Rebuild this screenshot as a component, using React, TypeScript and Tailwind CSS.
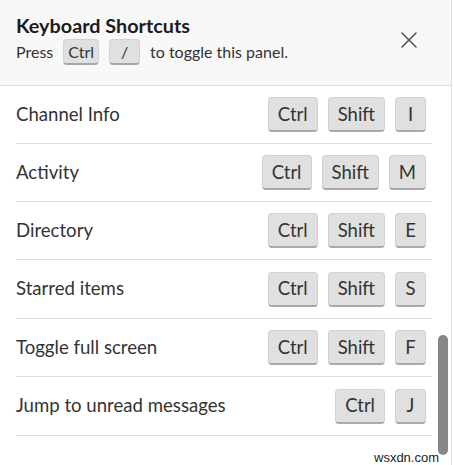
import React from "react";

const rows: { label: string; keys: string[]; h: string }[] = [
  { label: "Channel Info", keys: ["Ctrl", "Shift", "I"], h: "h-[58px]" },
  { label: "Activity", keys: ["Ctrl", "Shift", "M"], h: "h-[58px]" },
  { label: "Directory", keys: ["Ctrl", "Shift", "E"], h: "h-[58px]" },
  { label: "Starred items", keys: ["Ctrl", "Shift", "S"], h: "h-[59px]" },
  { label: "Toggle full screen", keys: ["Ctrl", "Shift", "F"], h: "h-[58px]" },
  { label: "Jump to unread messages", keys: ["Ctrl", "J"], h: "h-[59px]" },
];

function Key({ k, small }: { k: string; small?: boolean }) {
  if (small) {
    return (
      <span className="inline-flex h-[26px] min-w-[31px] items-center justify-center rounded-[4px] border border-[#d2d2d2] border-b-2 border-b-[#a8a8a8] bg-[#e0e0e0] px-[4px] text-[16px] leading-none text-[#333]">
        {k}
      </span>
    );
  }
  return (
    <span className="inline-flex h-[35px] min-w-[31px] items-center justify-center rounded-[4px] border border-[#d2d2d2] border-b-2 border-b-[#a8a8a8] bg-[#e0e0e0] px-[9px] text-[18.5px] leading-none text-[#333]">
      {k}
    </span>
  );
}

export default function App() {
  return (
    <div
      className="relative h-[465px] w-[453px] overflow-hidden bg-white"
      style={{ fontFamily: "Lato, 'Noto Sans', sans-serif" }}
    >
      <div className="h-full w-[452px] border-r border-[#e2e2e2]">
        <div className="flex h-[86px] items-start justify-between border-b border-[#dcdcdc] bg-[#f8f8f8] pl-4 pr-[34px]">
          <div className="pt-[12px]">
            <div className="text-[19.8px] font-bold leading-[26px] text-[#1d1c1d]">
              Keyboard Shortcuts
            </div>
            <div className="mt-[1px] flex items-center text-[16px] text-[#333]">
              <span>Press</span>
              <span className="ml-[10px]">
                <Key k="Ctrl" small />
              </span>
              <span className="ml-[10px]">
                <Key k="/" small />
              </span>
              <span className="ml-[10px]">to toggle this panel.</span>
            </div>
          </div>
          <button className="mt-[31px] flex h-[17px] w-[17px] items-center justify-center text-[#555]">
            <svg width="16" height="16" viewBox="0 0 16 16" fill="none" stroke="currentColor" strokeWidth="1.6" strokeLinecap="round">
              <path d="M1 1 L15 15 M15 1 L1 15" />
            </svg>
          </button>
        </div>
        <div className="ml-4 mr-[19px]">
          {rows.map((r) => (
            <div
              key={r.label}
              className={`flex ${r.h} items-center justify-between border-b border-[#dddddd] pr-[6px]`}
            >
              <span className="text-[18.6px] text-[#333]">{r.label}</span>
              <div className="flex gap-[10px]">
                {r.keys.map((k) => (
                  <Key key={k} k={k} />
                ))}
              </div>
            </div>
          ))}
        </div>
      </div>
      <div className="absolute left-[438px] top-[335px] h-[120px] w-[10px] rounded-full bg-[#878787]" />
      <div
        className="absolute left-[374px] top-[448px] text-[13px] text-[#222]"
        style={{ fontFamily: "'Liberation Sans', Arial, sans-serif" }}
      >
        wsxdn.com
      </div>
    </div>
  );
}
